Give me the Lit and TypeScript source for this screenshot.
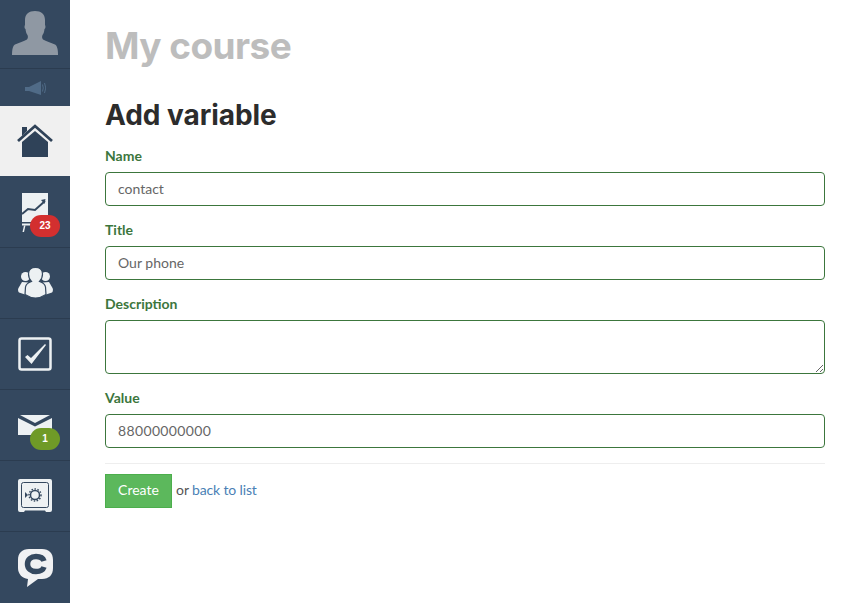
import { LitElement, html, css, svg } from "lit";
import { customElement } from "lit/decorators.js";

const icons = {
  user: svg`<svg width="46" height="45" viewBox="12 10 46 45"><path fill="#8f98a3" d="M12 55c0-6 1-9.500 3-10.500 4-2 9-3 12-5 1-1 1.200-3 .5-4.500-1-1-1.700-3-2-6-1 0-1.300-3-.5-4V20c0-6 4-9 10-9s10 3 10 9v5c.8 1 .5 4-.5 4-.3 3-1 5-2 6-.7 1.500-.5 3.500.5 4.500 3 2 8 3 12 5 2 1 3 4.500 3 10.500z"/></svg>`,
  sound: svg`<svg width="21" height="14" viewBox="24 79 21 14"><g fill="#506b87"><rect x="24" y="85" width="4" height="4"/><path d="M28 85 40 79v14l-12-4z"/></g><path d="M41.500 82.500q1.500 3.500 0 7M43.500 81q2.500 5 0 10" fill="none" stroke="#506b87" stroke-width="1"/></svg>`,
  home: svg`<svg width="36" height="34" viewBox="0 0 36 34"><path fill="#2f4258" d="M5 3h5v4l-5 5z"/><path d="M1 17 18 2l17 15" fill="none" stroke="#2f4258" stroke-width="2.800"/><path fill="#2f4258" d="M5 18 18 7 31 18v15H5z"/></svg>`,
  chart: svg`<svg width="26" height="39" viewBox="22 192 26 39"><path fill="#edf1f3" d="M22 192h26v29H22z"/><path d="m22 213 6-5 7 1 10-9" fill="none" stroke="#34485f" stroke-width="2"/><path d="m41 199 4.500-1-1 5z" fill="#34485f"/><path d="M21 222.500h12v2H21z" fill="#edf1f3"/><path d="M24 224.500h1.500l-1.500 6.500h-1.500z" fill="#edf1f3"/></svg>`,
  people: svg`<svg width="35" height="31" viewBox="18 267 35 31"><g fill="#edf1f3"><circle cx="25.500" cy="275.500" r="4.500"/><circle cx="45.500" cy="275.500" r="4.500"/><path d="M22 281l-3.500 6c-.8 1.500-.5 3.500.5 4.500l6 2 3-12z"/><path d="M49 281l3.500 6c.8 1.500.5 3.500-.5 4.500l-6 2-3-12z"/></g><path fill="#edf1f3" stroke="#34485f" stroke-width="1.200" d="M35.500 266.500c4.500 0 7 3 7 6.500s-1.500 6-3 7.500c3 1 5.500 2.500 6 5.500l.5 7.500c-3 2-7 3.500-10.500 3.500s-7.500-1.500-10.500-3.500l.5-7.500c.5-3 3-4.500 6-5.500-1.500-1.500-3-4-3-7.500s2.500-6.500 7-6.500z"/></svg>`,
  check: svg`<svg width="34" height="34" viewBox="0 0 34 34"><rect x="1.500" y="1.500" width="31" height="31" rx="2" fill="none" stroke="#edf1f3" stroke-width="2.500"/><path d="m7 20 2.500-2 3.500 3L27 7l1 1L13.500 27z" fill="#edf1f3"/></svg>`,
  mail: svg`<svg width="34" height="20" viewBox="0 0 34 20"><path fill="#edf1f3" d="M0 3v17h34V3L17 11.500z"/><path fill="#edf1f3" d="M2 0h30L17 8z"/></svg>`,
  safe: svg`<svg width="34" height="34" viewBox="0 0 34 34"><path fill="#edf1f3" d="M2 0h30q2 0 2 2v29q0 2-2 2h-4l-1-1.500H7L6 33H2q-2 0-2-2V2q0-2 2-2z"/><rect x="3.500" y="3.500" width="27" height="25" rx="2" fill="none" stroke="#34485f" stroke-width="1"/><circle cx="17" cy="16" r="4.500" fill="none" stroke="#34485f" stroke-width="1.500"/><circle cx="17" cy="16" r="6" fill="none" stroke="#34485f" stroke-width="1.500" stroke-dasharray="1.500 1.500"/><path d="M7 13v6l3-3z" fill="#34485f"/></svg>`,
  chat: svg`<svg width="35" height="38" viewBox="0 0 35 38"><path fill="#f0f1f3" d="M11 0h13c7 0 11 4 11 11v8c0 7-4 11-11 11h-4l-11 8 1-8c-6-1-10-5-10-11v-8C0 4 4 0 11 0z"/><path d="M26 12c-1-3-4-4.500-8-4.500-5 0-8.500 3-8.500 7.500s3.500 7.500 8.500 7.500c4 0 7-1.500 8-4.500" fill="none" stroke="#34485f" stroke-width="5.500"/></svg>`,
};

@customElement("app-root")
export class AppRoot extends LitElement {
  static styles = css`
    :host { display: flex; min-height: 603px; background: #fff; font-family: "Lato", "Open Sans", sans-serif; color: #555; }
    * { box-sizing: border-box; }
    .side { width: 70px; flex: none; background: #34485f; display: flex; flex-direction: column; height: 603px; overflow: hidden; }
    .item { height: 71px; flex: none; display: flex; align-items: center; justify-content: center; position: relative; border-bottom: 1px solid #2b3c50; }
    .item.user { height: 69px; align-items: flex-end; padding-bottom: 13px; }
    .item.sound { height: 37px; border-bottom: 0; }
    .item.home { height: 70px; margin-bottom: 1px; background: #f0f0f0; border-bottom: 0; padding-bottom: 1px; }
    .item.last { border-bottom: 0; }
    svg { display: block; }
    .badge { position: absolute; left: 30px; top: 38px; width: 30px; height: 22px; border-radius: 11px; color: #fff; font: bold 10px/22px "Liberation Sans", sans-serif; text-align: center; }
    .red { background: #d32f2f; }
    .green { background: #6f9a27; }
    .main { flex: 1; min-width: 0; padding: 22px 29px 0 35px; }
    h1, h2 { margin: 0; font-family: "Inter", sans-serif; font-weight: 700; }
    h1 { font-size: 37px; line-height: 48px; color: #bdbdbd; letter-spacing: -0.55px; }
    h2 { font-size: 28px; line-height: 36px; color: #2c2c2c; margin-top: 27px; letter-spacing: -0.05px; }
    form { display: flex; flex-direction: column; margin-top: 13px; }
    label { font-size: 14px; line-height: 20px; font-weight: 700; color: #3c763d; display: block; margin-bottom: 6px; }
    input, textarea { display: block; width: 100%; border: 1px solid #3c763d; border-radius: 4px; padding: 5px 12px 7px; font: 14px/20px "Lato", sans-serif; color: #666; background: #fff; outline: none; margin: 0; }
    input { height: 34px; margin-bottom: 14px; }
    input.num { letter-spacing: 0.35px; }
    textarea { height: 54px; margin-bottom: 14px; resize: vertical; }
    .sep { height: 1px; background: #eee; margin: 1px 0 10px; }
    .actions { display: flex; align-items: center; gap: 4px; font-size: 14px; line-height: 20px; }
    button { width: 67px; height: 34px; background: #5cb85c; border: 1px solid #4cae4c; color: #fff; font: 14px/20px "Lato", sans-serif; padding: 0 0 2px; }
    .muted, a { margin-bottom: 3px; }
    a { color: #4a7fb5; text-decoration: none; letter-spacing: -0.15px; margin-left: -1px; }
    .muted { color: #555; }
  `;

  render() {
    return html`
      <nav class="side">
        <div class="item user">${icons.user}</div>
        <div class="item sound">${icons.sound}</div>
        <div class="item home">${icons.home}</div>
        <div class="item">${icons.chart}<span class="badge red">23</span></div>
        <div class="item">${icons.people}</div>
        <div class="item">${icons.check}</div>
        <div class="item">${icons.mail}<span class="badge green">1</span></div>
        <div class="item">${icons.safe}</div>
        <div class="item last">${icons.chat}</div>
      </nav>
      <main class="main">
        <h1>My course</h1>
        <h2>Add variable</h2>
        <form>
          <label>Name</label>
          <input value="contact" />
          <label>Title</label>
          <input value="Our phone" />
          <label>Description</label>
          <textarea></textarea>
          <label>Value</label>
          <input class="num" value="88000000000" />
          <div class="sep"></div>
          <div class="actions">
            <button type="button">Create</button>
            <span class="muted">or</span> <a href="#">back to list</a>
          </div>
        </form>
      </main>
    `;
  }
}
